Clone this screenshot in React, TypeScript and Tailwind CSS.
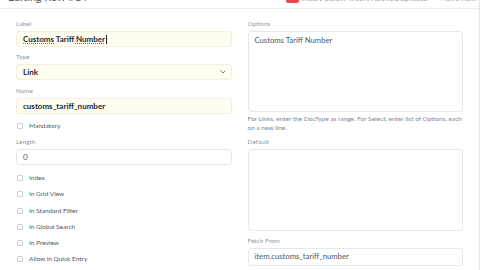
import React from "react";

const Label = ({ children }: { children: React.ReactNode }) => (
  <div className="h-[10px] leading-[10px] text-[6.5px] text-[#8d99a6] mb-[2px]">{children}</div>
);

const Check = ({ label }: { label: string }) => (
  <div className="flex items-center h-[10px] gap-[6px] pl-[1px]">
    <span className="w-[6px] h-[6px] border border-[#c8cfd5] rounded-[1px] bg-white shrink-0" />
    <span className="text-[6.5px] text-[#4c5a67] leading-[10px]">{label}</span>
  </div>
);

export default function App() {
  return (
    <div className="w-[480px] h-[270px] overflow-hidden bg-white font-['Lato',sans-serif] border-r border-[#e2e6e9]">
      {/* header (clipped at top) */}
      <div className="-mt-[15px] h-[24px] border-b border-[#ebeef0] flex items-end justify-between px-[8px] pb-[5px]">
        <div className="text-[11px] leading-[12px] text-[#555d66]">Editing Row #14</div>
        <div className="flex items-end">
          <span className="w-[13px] h-[12px] bg-[#e24c4c] rounded-[2px] mr-[3px]" />
          <span className="w-[47px] text-[8px] leading-[10px] text-[#a0a8b0] whitespace-nowrap">Insert Below</span>
          <span className="w-[45px] text-[8px] leading-[10px] text-[#a0a8b0] whitespace-nowrap">Insert Above</span>
          <span className="w-[45px] text-[8px] leading-[10px] text-[#a0a8b0] whitespace-nowrap">Duplicate</span>
          <span className="w-[32px] text-[8px] leading-[10px] text-[#a0a8b0] whitespace-nowrap">Move Row</span>
        </div>
      </div>

      <div className="grid grid-cols-2 gap-[16px] px-[16px] pt-[10px]">
        {/* left column */}
        <div className="flex flex-col">
          <Label>Label</Label>
          <div className="h-[16px] rounded-[3px] bg-[#fffcf0] border border-[#f3eedd] flex items-center px-[6px] text-[8px] font-bold text-[#1f272e]">
            <span className="underline decoration-dotted decoration-[#e23b3b] underline-offset-[1px]">Customs</span>
            <span>&nbsp;Tariff&nbsp;</span>
            <span className="underline decoration-dotted decoration-[#e23b3b] underline-offset-[1px]">Number</span>
            <span className="w-[0.5px] h-[9px] bg-[#1f272e] ml-[0.5px]" />
          </div>

          <div className="mt-[5px]">
            <Label>Type</Label>
            <div className="h-[16px] rounded-[3px] bg-[#fffcf0] border border-[#f3eedd] flex items-center justify-between pl-[6px] pr-[5px] text-[8px] font-bold text-[#1f272e]">
              <span>Link</span>
              <svg width="6" height="4" viewBox="0 0 6 4" fill="none">
                <path d="M0.8 0.8 L3 3 L5.2 0.8" stroke="#6c7680" strokeWidth="0.9" strokeLinecap="round" strokeLinejoin="round" />
              </svg>
            </div>
          </div>

          <div className="mt-[6px]">
            <Label>Name</Label>
            <div className="h-[16px] rounded-[3px] bg-[#fffcf0] border border-[#f3eedd] flex items-center px-[6px] text-[8px] font-bold text-[#1f272e]">
              customs_tariff_number
            </div>
          </div>

          <div className="mt-[7px]">
            <Check label="Mandatory" />
          </div>

          <div className="mt-[6px]">
            <Label>Length</Label>
            <div className="h-[16px] rounded-[3px] bg-white border border-[#e6e9ec] flex items-center px-[6px] text-[8px] text-[#4c5a67]">
              0
            </div>
          </div>

          <div className="mt-[8px] flex flex-col gap-[6.3px]">
            <Check label="Index" />
            <Check label="In Grid View" />
            <Check label="In Standard Filter" />
            <Check label="In Global Search" />
            <Check label="In Preview" />
            <Check label="Allow in Quick Entry" />
          </div>
        </div>

        {/* right column */}
        <div className="flex flex-col">
          <Label>Options</Label>
          <div className="h-[81px] rounded-[3px] bg-white border border-[#e6e9ec] px-[6px] pt-[3px] text-[7.7px] leading-[10px] text-[#4c5a67]">
            Customs Tariff Number
          </div>
          <div className="mt-[2px] text-[6.5px] leading-[9px] text-[#7d8893]">
            For Links, enter the DocType as range. For Select, enter list of Options, each on a new line.
          </div>

          <div className="mt-[5px]">
            <Label>Default</Label>
            <div className="h-[82px] rounded-[3px] bg-white border border-[#e6e9ec]" />
          </div>

          <div className="mt-[5px]">
            <Label>Fetch From</Label>
            <div className="h-[18px] rounded-[3px] bg-white border border-[#e6e9ec] flex items-center px-[6px] text-[7.7px] text-[#4c5a67]">
              item.customs_tariff_number
            </div>
          </div>
        </div>
      </div>
    </div>
  );
}
